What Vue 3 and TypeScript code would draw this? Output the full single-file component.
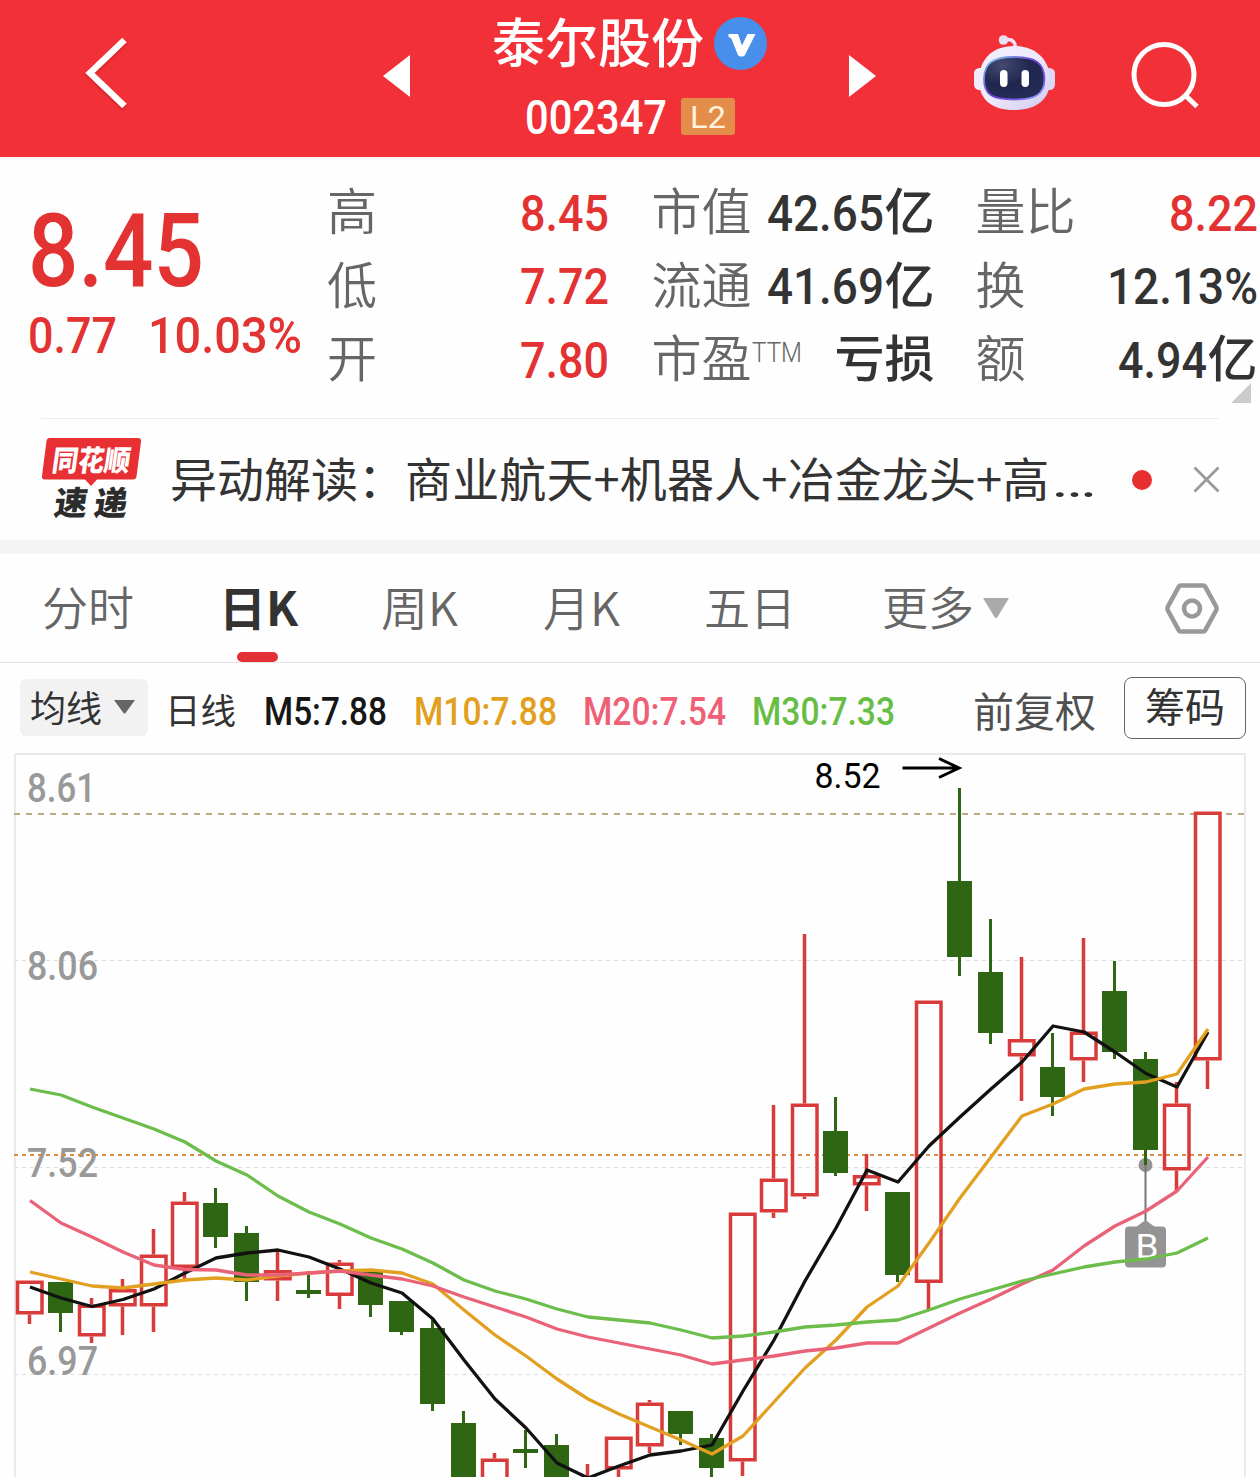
<script setup lang="ts">
import { h, type FunctionalComponent } from 'vue'

interface FitProps {
  t: string
  w: number
  s: number
  weight?: number
}

// Condensed numeral text: stretched to an exact advance width, capitals centred in the box.
const Fit: FunctionalComponent<FitProps> = (p) =>
  h('svg', { width: p.w, height: p.s, style: { display: 'block', overflow: 'visible', flex: 'none' } }, [
    h(
      'text',
      {
        x: 0,
        y: p.s * 0.8555,
        fill: 'currentColor',
        'font-family': 'Roboto, sans-serif',
        'font-size': p.s,
        'font-weight': p.weight ?? 500,
        textLength: p.w,
        lengthAdjust: 'spacingAndGlyphs',
      },
      p.t,
    ),
  ])
Fit.props = ['t', 'w', 's', 'weight']

interface Cell {
  label: string
  sup?: string
  num?: string
  w?: number
  unit?: string
  red?: boolean
}

const columns: Cell[][] = [
  [
    { label: '高', num: '8.45', w: 89, red: true },
    { label: '低', num: '7.72', w: 89, red: true },
    { label: '开', num: '7.80', w: 89, red: true },
  ],
  [
    { label: '市值', num: '42.65', w: 117, unit: '亿' },
    { label: '流通', num: '41.69', w: 117, unit: '亿' },
    { label: '市盈', sup: 'TTM', unit: '亏损' },
  ],
  [
    { label: '量比', num: '8.22', w: 89, red: true },
    { label: '换', num: '12.13%', w: 151 },
    { label: '额', num: '4.94', w: 89, unit: '亿' },
  ],
]

const averages = [
  { t: 'M5:7.88', w: 123, c: '#161616' },
  { t: 'M10:7.88', w: 143, c: '#e2a01f' },
  { t: 'M20:7.54', w: 143, c: '#ee6075' },
  { t: 'M30:7.33', w: 143, c: '#68bd45' },
]

// up flag, high, body top, body bottom, low
const candles: [number, number, number, number, number][] = [
  [1, 1281, 1280.5, 1314.5, 1324],
  [0, 1282, 1282, 1313, 1332],
  [1, 1298, 1304.5, 1336.5, 1343],
  [1, 1279, 1289, 1306.5, 1335],
  [1, 1229, 1254.5, 1306.5, 1332],
  [1, 1192, 1201.5, 1268, 1281],
  [0, 1188, 1203, 1237, 1248],
  [0, 1226, 1233, 1282, 1301],
  [1, 1249, 1270, 1280.5, 1301],
  [0, 1271, 1290, 1294, 1298],
  [1, 1260, 1262.5, 1296, 1309],
  [0, 1270, 1272, 1305, 1317],
  [0, 1301, 1301, 1332, 1335],
  [0, 1319, 1328, 1404, 1411],
  [0, 1411, 1423, 1490, 1490],
  [1, 1453, 1458.5, 1490, 1495],
  [0, 1430, 1449, 1453, 1468],
  [0, 1434, 1445, 1490, 1490],
  [1, 1464, 1482, 1490, 1495],
  [1, 1437, 1436.5, 1469.5, 1490],
  [1, 1400, 1402.5, 1446.5, 1453],
  [0, 1411, 1411, 1434, 1445],
  [0, 1434, 1438, 1468, 1480],
  [1, 1213, 1212.5, 1461.5, 1476],
  [1, 1105, 1178.5, 1212.5, 1218],
  [1, 934, 1103.5, 1196.5, 1199],
  [0, 1097, 1131, 1173, 1176],
  [1, 1154, 1175, 1185.5, 1211],
  [0, 1192, 1192, 1275, 1282],
  [1, 1001, 1000.5, 1283, 1309],
  [0, 788, 881, 957, 976],
  [0, 919, 972, 1033, 1044],
  [1, 957, 1039, 1056.5, 1101],
  [0, 1033, 1067, 1097, 1116],
  [1, 938, 1031.5, 1060.5, 1082],
  [0, 961, 991, 1052, 1059],
  [0, 1052, 1059, 1150, 1165],
  [1, 1082, 1103.5, 1170.5, 1191],
  [1, 812, 811.5, 1060.5, 1089],
]
const cx = (i: number) => 29.5 + 31 * i

const ma5 = [1287, 1298, 1306.5, 1299.5, 1289, 1273, 1258, 1253, 1250, 1257, 1269, 1283, 1293, 1319, 1360, 1399, 1428, 1463, 1478, 1466, 1455, 1451, 1445, 1391, 1340, 1281, 1228, 1170, 1182, 1146, 1117, 1089, 1062, 1026, 1032, 1052, 1073.5, 1087, 1032]
const ma10 = [1272, 1279, 1286, 1288, 1284, 1280, 1278, 1280, 1276, 1273, 1271, 1270, 1273, 1284, 1310, 1335, 1356, 1379, 1399, 1414, 1427, 1440, 1454, 1436, 1402, 1368, 1340, 1307, 1286, 1243, 1198, 1157, 1116, 1104, 1089, 1084, 1082, 1074, 1029]
const ma20 = [1200.5, 1223, 1237, 1252, 1265, 1269.5, 1270, 1275, 1275, 1273, 1271, 1275, 1279, 1286, 1297, 1307, 1317, 1329, 1337, 1343, 1349, 1355, 1364, 1360, 1356, 1351, 1348, 1343, 1343, 1328, 1313, 1299, 1284, 1270, 1246, 1226, 1211, 1191, 1157]
const ma30 = [1089, 1095, 1107, 1118, 1129, 1142, 1161, 1175, 1196, 1212, 1224, 1238, 1249, 1263, 1280, 1291, 1299, 1309, 1317, 1320, 1323, 1330, 1338, 1336, 1332, 1327, 1325, 1322, 1320, 1310, 1299, 1290, 1281, 1274, 1267, 1262, 1259, 1253, 1238]

const curves = [
  { c: '#111111', v: ma5 },
  { c: '#e2a021', v: ma10 },
  { c: '#e96278', v: ma20 },
  { c: '#6cbd4b', v: ma30 },
].map((s) => ({ c: s.c, pts: s.v.map((y, i) => `${30 + 31 * i},${y}`).join(' ') }))

const scale = [
  { t: '8.61', y: 802, w: 69 },
  { t: '8.06', y: 980, w: 71 },
  { t: '7.52', y: 1177, w: 71 },
  { t: '6.97', y: 1375, w: 71 },
]
</script>

<template>
  <div class="app">
    <header class="top">
      <svg class="back" width="46" height="78" viewBox="84 34 46 78">
        <path d="M124.5 40 90 73l34.500 33" fill="none" stroke="#fff" stroke-width="6.500" />
      </svg>
      <svg class="prev" width="27" height="42" viewBox="0 0 27 42"><path d="M0 21 27 0v42z" fill="#fff" /></svg>
      <div class="name">
        <div class="line1">
          <span class="title">泰尔股份</span>
          <svg width="53" height="53" viewBox="0 0 53 53">
            <circle cx="26.500" cy="26.500" r="26.500" fill="#488fec" />
            <path d="M14.500 17h9.500l4 11.500L33.500 17h8L31 38q-1 1.500-3 1.500h-1.500q-2 0-2.700-1.700L18 23q-.8-2.500-3.500-3z" fill="#fff" />
          </svg>
        </div>
        <div class="line2">
          <Fit t="002347" :w="142" :s="48" />
          <span class="l2"><Fit t="L2" :w="36" :s="31" :weight="400" /></span>
        </div>
      </div>
      <svg class="next" width="27" height="42" viewBox="0 0 27 42"><path d="M27 21 0 0v42z" fill="#fff" /></svg>
      <svg class="robot" width="82" height="76" viewBox="974 35 82 76">
        <defs>
          <linearGradient id="shell" x1="0" y1="0" x2="1" y2="1">
            <stop offset="0" stop-color="#f3f0fc" /><stop offset=".5" stop-color="#eee9fa" /><stop offset="1" stop-color="#cfcaf0" />
          </linearGradient>
          <linearGradient id="rim" x1="0" y1="0" x2="1" y2="1">
            <stop offset="0" stop-color="#7fd6ea" /><stop offset=".45" stop-color="#6d3fd0" /><stop offset=".75" stop-color="#7a5be8" /><stop offset="1" stop-color="#8fb4f4" />
          </linearGradient>
          <radialGradient id="face" cx=".3" cy=".2" r=".9">
            <stop offset="0" stop-color="#444a70" /><stop offset=".5" stop-color="#1f2750" /><stop offset="1" stop-color="#252c58" />
          </radialGradient>
        </defs>
        <path d="M1004 39.500h4q7 0 7.500 8" fill="none" stroke="#f0e4f4" stroke-width="3.500" />
        <circle cx="1003.500" cy="40" r="4.800" fill="#ecdff2" />
        <rect x="974" y="68" width="12" height="22" rx="5.500" fill="#f0ecfb" />
        <rect x="1043" y="68" width="12" height="22" rx="5.500" fill="#ded6f4" />
        <path d="M1014 46c22 0 36 14 36 34s-14 30-36 30-35-10-35-30 13-34 35-34z" fill="url(#shell)" />
        <path d="M1014 57c21 0 30.500 6 30.500 22s-9.500 20.500-30.500 20.500S984 95 984 79s9-22 30-22z" fill="url(#face)" stroke="url(#rim)" stroke-width="1.800" />
        <rect x="1000" y="70" width="7.500" height="17" rx="3.700" fill="#fff" />
        <rect x="1021.500" y="70" width="7.500" height="17" rx="3.700" fill="#fff" />
      </svg>
      <svg class="search" width="70" height="70" viewBox="1130 40 70 70">
        <g fill="none" stroke="#fff" stroke-width="5">
          <circle cx="1164" cy="74.500" r="30" /><path d="m1185 95 12 11.500" />
        </g>
      </svg>
    </header>

    <section class="quote">
      <div class="price red">
        <Fit t="8.45" :w="176" :s="102" />
        <div class="chg">
          <Fit t="0.77" :w="89" :s="50" />
          <Fit t="10.03%" :w="154" :s="50" />
        </div>
      </div>
      <div v-for="(col, i) in columns" :key="i" class="col">
        <div v-for="c in col" :key="c.label" class="cell">
          <span class="lab">{{ c.label }}</span>
          <span v-if="c.sup" class="sup"><Fit :t="c.sup" :w="50" :s="27" :weight="300" /></span>
          <span class="val" :class="{ red: c.red }">
            <Fit v-if="c.num" :t="c.num" :w="c.w!" :s="50" />
            <span v-if="c.unit" class="unit">{{ c.unit }}</span>
          </span>
        </div>
      </div>
      <svg class="corner" width="20" height="20"><path d="M20 0v20H0z" fill="#ccc" /></svg>
    </section>

    <section class="news">
      <svg class="logo" width="100" height="82" viewBox="42 437 100 82">
        <path d="M49.500 438h88.500q3.500 0 3 3.500l-4.500 35q-.5 3-3.500 3H97l-6 6.500-6-6.500H45q-3.500 0-3-3.500l4.500-35q.5-3 3-3z" fill="#e82f33" />
        <g font-family="'Noto Sans CJK SC', sans-serif" font-weight="900">
          <text transform="translate(51 470.500) skewX(-8)" font-size="29" fill="#fff" textLength="78" lengthAdjust="spacingAndGlyphs">同花顺</text>
          <text transform="translate(53 515) skewX(-8)" font-size="33" fill="#2c2c2c" textLength="73" lengthAdjust="spacing">速递</text>
        </g>
      </svg>
      <span class="headline">异动解读：<span class="rest">商业航天+机器人+冶金龙头+高</span><Fit class="dots" t="…" :w="46" :s="44" :weight="400" /></span>
      <span class="dot"></span>
      <svg class="close" width="27" height="27" viewBox="0 0 27 27"><path d="m1.500 1.500 24 24m0-24-24 24" stroke="#999" stroke-width="2.800" /></svg>
    </section>

    <nav class="tabs">
      <span class="tab t1">分时</span>
      <span class="tab t2 on">日K</span>
      <span class="tab t3">周K</span>
      <span class="tab t4">月K</span>
      <span class="tab t5">五日</span>
      <span class="tab t6">更多<svg width="26" height="21" viewBox="0 0 26 21"><path d="M0 0h26L14.500 19q-1.500 2-3 0z" fill="#aaa" /></svg></span>
      <svg class="hex" width="56" height="53" viewBox="0 0 56 53">
        <g fill="none" stroke="#999" stroke-width="4.500" stroke-linejoin="round">
          <path d="M17 3.500h22q1.500 0 2.300 1.300l11 20q.8 1.700 0 3.400l-11 20Q40.500 49.500 39 49.500H17q-1.500 0-2.300-1.300l-11-20q-.8-1.700 0-3.400l11-20Q15.500 3.500 17 3.500z" />
          <circle cx="28" cy="26.500" r="8" />
        </g>
      </svg>
    </nav>

    <section class="ma">
      <span class="pick">均线<svg width="21" height="14" viewBox="0 0 21 14"><path d="M0 0h21L11.500 13q-1 1-2 0z" fill="#666" /></svg></span>
      <span class="day">日线</span>
      <span v-for="a in averages" :key="a.t" class="avg" :style="{ color: a.c }"><Fit :t="a.t" :w="a.w" :s="38" /></span>
      <span class="adj">前复权</span>
      <span class="chips">筹码</span>
    </section>

    <svg class="chart" width="1260" height="724" viewBox="0 753 1260 724">
      <path d="M15 1480V754h1230v726" fill="none" stroke="#eaeaea" stroke-width="2" />
      <g stroke="#dedede" stroke-width="1.200" stroke-dasharray="4 4">
        <path d="M14 960.500h1230M14 1167.500h1230M14 1374.500h1230" />
      </g>
      <g fill="#999" font-family="Roboto, sans-serif" font-size="41" font-weight="500">
        <text v-for="s in scale" :key="s.t" x="27" :y="s.y" :textLength="s.w" lengthAdjust="spacingAndGlyphs">{{ s.t }}</text>
      </g>
      <path d="M14 814h1230" stroke="#bba981" stroke-width="2" stroke-dasharray="6 6" />
      <path d="M14 1155h1230" stroke="#d98a45" stroke-width="2" stroke-dasharray="4 4" />

      <circle cx="1145.500" cy="1165" r="7" fill="#949494" />
      <path d="M1145.500 1165v57" stroke="#777" stroke-width="2" />
      <path d="m1136 1227 9.500-7 9.500 7z" fill="#949494" />
      <rect x="1125" y="1226.500" width="41" height="41" rx="4" fill="#949494" />
      <text x="1135.500" y="1258" fill="#fff" font-family="Roboto, sans-serif" font-size="34" textLength="23" lengthAdjust="spacingAndGlyphs">B</text>

      <template v-for="(c, i) in candles" :key="i">
        <g v-if="c[0]" stroke="#d93a3a" stroke-width="3.500" fill="none">
          <path :d="`M${cx(i)} ${c[1]}V${Math.max(c[1], c[2])}M${cx(i)} ${c[3]}V${c[4]}`" />
          <rect :x="cx(i) - 12" :y="c[2] + 1.75" width="24.500" :height="c[3] - c[2] - 3.5" />
        </g>
        <g v-else fill="#2f6613">
          <rect :x="cx(i) - 1.5" :y="c[1]" width="3" :height="c[4] - c[1]" />
          <rect :x="cx(i) - 12.5" :y="c[2]" width="25" :height="c[3] - c[2]" />
        </g>
      </template>

      <polyline v-for="l in curves" :key="l.c" :points="l.pts" fill="none" :stroke="l.c" stroke-width="3.300" stroke-linejoin="round" />

      <text x="814.500" y="788" fill="#000" font-family="Roboto, sans-serif" font-size="34.500" textLength="66" lengthAdjust="spacingAndGlyphs">8.52</text>
      <path d="M902.500 768H958M939 758.500l20 9.500-20 9.500" fill="none" stroke="#000" stroke-width="3" />
    </svg>
  </div>
</template>

<style>
body {
  margin: 0;
  background: #fff;
}
</style>

<style scoped>
.app {
  width: 1260px;
  height: 1477px;
  overflow: hidden;
  background: #fefefe;
  font-family: 'Noto Sans CJK SC', sans-serif;
  color: #333;
}
.app span {
  white-space: nowrap;
}
svg {
  display: block;
  flex: none;
}
.red {
  color: #e23232;
}
.top {
  display: flex;
  align-items: flex-start;
  height: 157px;
  background: #f23038;
  color: #fff;
}
.back {
  margin: 34px 0 0 84px;
  filter: drop-shadow(0 2px 1px rgba(120, 0, 0, 0.25));
}
.prev {
  margin: 55px 0 0 253px;
}
.name {
  width: 275px;
  margin: 0 0 0 82px;
}
.line1 {
  display: flex;
  align-items: flex-start;
  height: 87px;
}
.line1 svg {
  margin: 17px 0 0 10px;
}
.title {
  width: 212px;
  font-size: 53px;
  line-height: 81px;
  font-weight: 500;
}
.line2 {
  display: flex;
  align-items: center;
  height: 59px;
  padding-left: 33px;
}
.l2 {
  display: flex;
  align-items: center;
  justify-content: center;
  width: 54px;
  height: 37px;
  margin-left: 14px;
  border-radius: 3px;
  background: #e48d4b;
  color: #fff3dc;
}
.next {
  margin: 55px 0 0 82px;
}
.robot {
  margin: 35px 0 0 98px;
}
.search {
  margin: 40px 0 0 74px;
}
.quote {
  position: relative;
  display: flex;
  box-sizing: border-box;
  height: 262px;
  padding-top: 19px;
}
.quote::after {
  content: '';
  position: absolute;
  left: 41px;
  right: 41px;
  bottom: 0;
  height: 1px;
  background: #ececec;
}
.price {
  width: 299px;
  padding: 23px 0 0 28px;
}
.chg {
  display: flex;
  justify-content: space-between;
  width: 274px;
  margin-top: 9px;
}
.col {
  width: 282px;
  margin-right: 42.5px;
}
.col:nth-child(3) {
  width: 283px;
  margin-right: 41px;
}
.col:nth-child(4) {
  margin-right: 0;
}
.cell {
  display: flex;
  align-items: center;
  height: 73.5px;
}
.lab,
.unit {
  font-size: 50px;
  line-height: 66px;
}
.lab {
  margin-top: -9px;
  font-weight: 350;
  color: #666;
}
.sup {
  margin-top: -15px;
  color: #666;
}
.val {
  display: flex;
  align-items: center;
  margin-left: auto;
}
.unit {
  margin-top: -9px;
  margin-left: 1px;
  font-weight: 500;
}
.corner {
  position: absolute;
  right: 9px;
  top: 226px;
}
.news {
  display: flex;
  align-items: center;
  height: 121px;
  border-bottom: 14px solid #f4f4f4;
}
.logo {
  margin: -3px 0 0 42px;
  overflow: visible;
}
.headline {
  display: flex;
  align-items: center;
  width: 930px;
  margin: -7px 0 0 28px;
  font-size: 47px;
}
.rest {
  letter-spacing: 0.15px;
}
.dots {
  margin: 9px 0 0 1px;
}
.dot {
  width: 20px;
  height: 20px;
  margin-left: 32px;
  border-radius: 50%;
  background: #e82f2f;
}
.close {
  margin-left: 41px;
}
.tabs {
  position: relative;
  display: flex;
  align-items: center;
  height: 108px;
  border-bottom: 1px solid #e4e4e4;
  color: #666;
}
.tab {
  position: relative;
  display: flex;
  align-items: center;
  height: 108px;
  padding-bottom: 6px;
  box-sizing: border-box;
  font-size: 46px;
  font-weight: 350;
}
.t1 {
  width: 177px;
  margin-left: 42px;
}
.t2,
.t3,
.t4 {
  font-size: 47px;
}
.t2 {
  width: 162px;
}
.t3 {
  width: 162px;
}
.t4 {
  width: 161px;
}
.t5 {
  width: 178px;
}
.t6 svg {
  margin: 6px 0 0 9px;
}
.on {
  font-weight: 700;
  color: #333;
}
.on::after {
  content: '';
  position: absolute;
  left: 18px;
  bottom: 0;
  width: 41px;
  height: 10px;
  border-radius: 5px;
  background: #e23035;
}
.hex {
  margin-left: auto;
  margin-right: 40px;
}
.ma {
  display: flex;
  align-items: center;
  height: 90px;
}
.pick {
  display: flex;
  align-items: center;
  box-sizing: border-box;
  width: 128px;
  height: 57px;
  margin: -1px 17px 0 20px;
  padding: 0 0 3px 10px;
  border-radius: 6px;
  background: #f2f2f2;
  font-size: 36px;
}
.pick svg {
  margin: 1px 0 0 12px;
}
.day {
  width: 73px;
  font-size: 35.5px;
}
.avg {
  margin-left: 26.3px;
  padding-top: 5px;
}
.adj {
  margin-left: auto;
  padding-top: 1px;
  font-size: 41px;
  color: #505050;
}
.chips {
  box-sizing: border-box;
  width: 122px;
  height: 62px;
  margin: 0 14px 0 28px;
  border: 1.5px solid #666;
  border-radius: 8px;
  font-size: 40px;
  line-height: 55px;
  text-align: center;
}
</style>
